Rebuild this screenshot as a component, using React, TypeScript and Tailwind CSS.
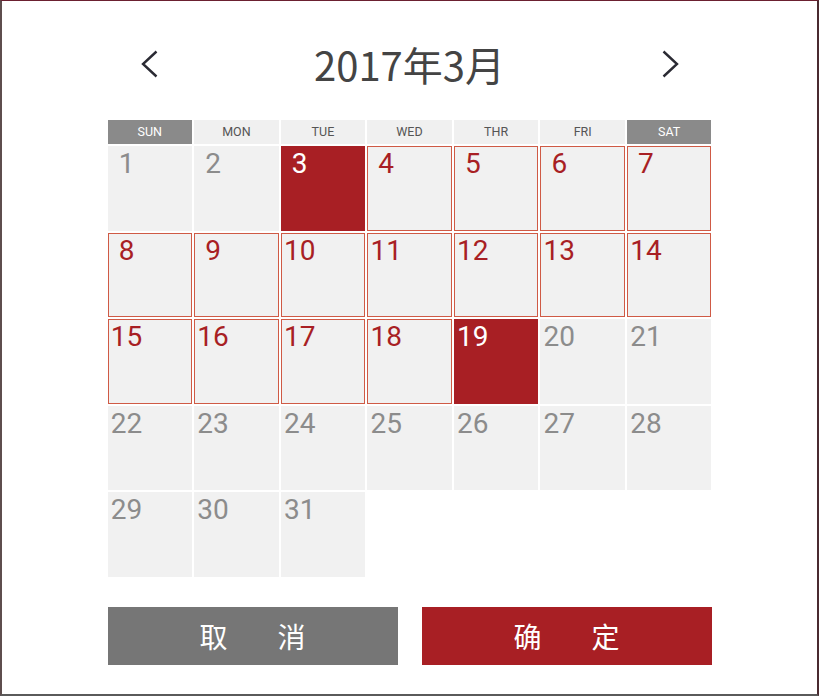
const WEEK = ["SUN", "MON", "TUE", "WED", "THR", "FRI", "SAT"];

// 3 and 19 are picked, 4..18 can be picked
const selected = [3, 19];
const available = [4, 5, 6, 7, 8, 9, 10, 11, 12, 13, 14, 15, 16, 17, 18];

const DayCell = ({ day }: { day: number }) => {
  let cls = "bg-[#f1f1f1] text-[#8c8c8c]";
  let inner = "w-[38px] pt-[4px]";
  if (selected.includes(day)) {
    cls = "bg-[#a81f24] text-white";
  } else if (available.includes(day)) {
    cls = "bg-[#f1f1f1] text-[#a81f24] border border-[#cf5a45]";
    inner = "w-[36px] pt-[3px]";
  }
  return (
    <div className={"aspect-square " + cls}>
      <div className={inner + " text-center text-[28px] leading-none"}>{day}</div>
    </div>
  );
};

const App = () => {
  const days = Array.from({ length: 31 }, (_, i) => i + 1);

  return (
    <div
      className="w-[819px] h-[696px] bg-white border-t border-l-2 border-r-2 border-b-2 border-t-[#6b2030] border-l-[#5e4e4e] border-r-[#4a2a30] border-b-[#5a5a5a]"
      style={{ fontFamily: "Roboto, 'Noto Sans CJK SC', sans-serif" }}
    >
      <div className="w-[604px] mx-auto pt-[37px]">
        <div className="h-[52px] px-[33px] flex items-center justify-between">
          <svg width="17" height="28" viewBox="0 0 17 28" fill="none">
            <polyline points="15.5,1.5 2,14 15.5,26.5" stroke="#2a2a33" strokeWidth="2.4" />
          </svg>
          <p className="text-[40px] leading-none text-[#444] font-['Noto_Sans_CJK_SC',sans-serif]">
            2017年3月
          </p>
          <svg width="17" height="28" viewBox="0 0 17 28" fill="none">
            <polyline points="1.5,1.5 15,14 1.5,26.5" stroke="#2a2a33" strokeWidth="2.4" />
          </svg>
        </div>

        <div className="mt-[30px] grid grid-cols-7 gap-[2px]">
          {WEEK.map((w, i) => (
            <div
              key={w}
              className={
                "h-[24px] flex items-center justify-center text-[12.5px] " +
                (i === 0 || i === 6 ? "bg-[#8a8a8a] text-white" : "bg-[#f0f0f0] text-[#555]")
              }
            >
              {w}
            </div>
          ))}
          {days.map((d) => (
            <DayCell key={d} day={d} />
          ))}
        </div>

        <div className="mt-[30px] flex justify-between">
          <button className="w-[290px] h-[58px] bg-[#767676] text-white text-[28px] flex items-center justify-center gap-[50px] font-['Noto_Sans_CJK_SC',sans-serif]">
            <span>取</span>
            <span>消</span>
          </button>
          <button className="w-[290px] h-[58px] bg-[#a81f24] text-white text-[28px] flex items-center justify-center gap-[50px] font-['Noto_Sans_CJK_SC',sans-serif]">
            <span>确</span>
            <span>定</span>
          </button>
        </div>
      </div>
    </div>
  );
};

export default App;
